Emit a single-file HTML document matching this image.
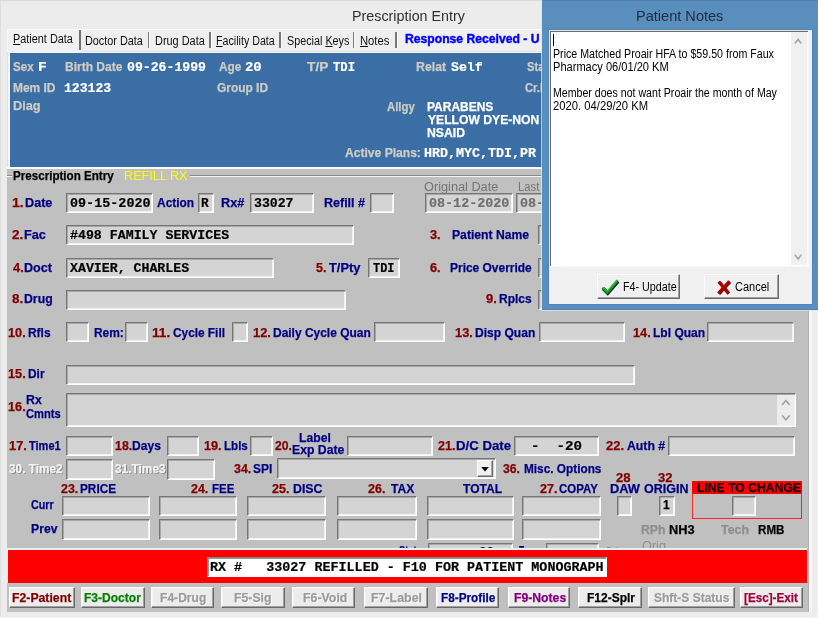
<!DOCTYPE html><html><head><meta charset="utf-8"><title>Prescription Entry</title><style>
*{box-sizing:border-box;margin:0;padding:0}
html,body{width:818px;height:618px;overflow:hidden;background:#f4f4f4}
body{position:relative;will-change:transform;font-family:"Liberation Sans",sans-serif;font-size:13px;color:#000}
.a{position:absolute;white-space:nowrap}
.t{position:absolute;white-space:pre;transform-origin:0 0}
.bd{-webkit-text-stroke:0.25px currentColor}
.bm{-webkit-text-stroke:0.2px currentColor}
.in{position:absolute;background:#d4d4d4;border:1px solid;border-color:#767676 #fff #fff #767676;box-shadow:inset 1px 1px 0 #a8a8a8,inset -1px -1px 0 #f4f4f4}
.dis{text-shadow:1px 1px 0 #808080}
.disb{text-shadow:1px 1px 0 #fff}
.btn{position:absolute;background:#ececec;border:1px solid;border-color:#fff #696969 #696969 #fff;box-shadow:inset -1px -1px 0 #a0a0a0,inset 1px 1px 0 #f4f4f4}
.sep{position:absolute;top:32px;width:1.3px;height:16px;background:#787878;box-shadow:1px 0 0 #fafafa}
</style></head><body>
<div class="a" style="left:0;top:0;width:817px;height:617px;background:#ececec;border-radius:0 0 5px 2px;border-left:1px solid #dedede"></div>
<div class="a" style="left:0;top:0;width:818px;height:1px;background:#dadada"></div>
<div class="a" style="left:6.5px;top:29px;width:805.5px;height:583px;background:#f7f7f7;border-left:1px solid #e2e2e2"></div>
<div class="t" style="left:351.68px;top:6.60px;font-family:'Liberation Sans',sans-serif;font-size:15px;line-height:17px;font-weight:normal;color:#303030;transform:scaleX(0.9539);">Prescription Entry</div>
<div class="a" style="left:7px;top:167px;width:802px;height:445px;background:#c0c0c0;border-top:2px solid #fbfbfb;border-right:1.5px solid #b0b0b0"></div>
<div class="a" style="left:7px;top:29px;width:805px;height:23px;background:#efefef;border-top:1px solid #fbfbfb;border-bottom:1px solid #e4e4e4"></div>
<div class="a" style="left:6.5px;top:29px;width:73.5px;height:23px;border-left:1px solid #f9f9f9;border-top:1px solid #f9f9f9;background:#f1f1f1"></div>
<div class="a" style="left:79.3px;top:30px;width:1.6px;height:19.5px;background:#707070"></div>
<div class="t" style="left:13.35px;top:31.50px;font-family:'Liberation Sans',sans-serif;font-size:12.5px;line-height:14px;font-weight:normal;color:#101010;transform:scaleX(0.8705);"><u>P</u>atient Data</div>
<div class="t" style="left:84.75px;top:33.60px;font-family:'Liberation Sans',sans-serif;font-size:12.5px;line-height:14px;font-weight:normal;color:#101010;transform:scaleX(0.8678);">Doctor Data</div>
<div class="t" style="left:155.05px;top:33.60px;font-family:'Liberation Sans',sans-serif;font-size:12.5px;line-height:14px;font-weight:normal;color:#101010;transform:scaleX(0.8739);">Dru<u>g</u> Data</div>
<div class="t" style="left:215.97px;top:33.60px;font-family:'Liberation Sans',sans-serif;font-size:12.5px;line-height:14px;font-weight:normal;color:#101010;transform:scaleX(0.8546);"><u>F</u>acility Data</div>
<div class="t" style="left:286.76px;top:33.60px;font-family:'Liberation Sans',sans-serif;font-size:12.5px;line-height:14px;font-weight:normal;color:#101010;transform:scaleX(0.8632);">Special <u>K</u>eys</div>
<div class="t" style="left:359.52px;top:33.60px;font-family:'Liberation Sans',sans-serif;font-size:12.5px;line-height:14px;font-weight:normal;color:#101010;transform:scaleX(0.8981);"><u>N</u>otes</div>
<div class="sep" style="left:148px"></div>
<div class="sep" style="left:209.3px"></div>
<div class="sep" style="left:279.4px"></div>
<div class="sep" style="left:353px"></div>
<div class="sep" style="left:395.4px"></div>
<div class="t bd" style="left:405.14px;top:31.60px;font-family:'Liberation Sans',sans-serif;font-size:12.5px;line-height:14px;font-weight:bold;color:#0000ff;transform:scaleX(0.9727);-webkit-text-stroke:0.45px #0000ff;">Response Received - U</div>
<div class="a" style="left:10px;top:52.5px;width:800px;height:114px;background:#3a6ea5"></div>
<div class="t bd" style="left:13.12px;top:59.30px;font-family:'Liberation Sans',sans-serif;font-size:13px;line-height:15px;font-weight:bold;color:#cfccc5;transform:scaleX(0.8909);">Sex</div>
<div class="t bm" style="left:37.67px;top:60.30px;font-family:'Liberation Mono',monospace;font-size:13.5px;line-height:16px;font-weight:bold;color:#ffffff;transform:scaleX(1.0746);">F</div>
<div class="t bd" style="left:64.95px;top:59.30px;font-family:'Liberation Sans',sans-serif;font-size:13px;line-height:15px;font-weight:bold;color:#cfccc5;transform:scaleX(0.9232);">Birth Date</div>
<div class="t bm" style="left:127.18px;top:60.30px;font-family:'Liberation Mono',monospace;font-size:13.5px;line-height:16px;font-weight:bold;color:#ffffff;transform:scaleX(0.9754);">09-26-1999</div>
<div class="t bd" style="left:218.62px;top:59.30px;font-family:'Liberation Sans',sans-serif;font-size:13px;line-height:15px;font-weight:bold;color:#cfccc5;transform:scaleX(0.9071);">Age</div>
<div class="t bm" style="left:244.95px;top:60.30px;font-family:'Liberation Mono',monospace;font-size:13.5px;line-height:16px;font-weight:bold;color:#ffffff;transform:scaleX(1.0302);">20</div>
<div class="t bd" style="left:307.30px;top:59.30px;font-family:'Liberation Sans',sans-serif;font-size:13px;line-height:15px;font-weight:bold;color:#cfccc5;transform:scaleX(1.0563);">T/P</div>
<div class="t bm" style="left:333.41px;top:60.30px;font-family:'Liberation Mono',monospace;font-size:13.5px;line-height:16px;font-weight:bold;color:#ffffff;transform:scaleX(0.9066);">TDI</div>
<div class="t bd" style="left:416.43px;top:59.30px;font-family:'Liberation Sans',sans-serif;font-size:13px;line-height:15px;font-weight:bold;color:#cfccc5;transform:scaleX(0.9478);">Relat</div>
<div class="t bm" style="left:451.29px;top:60.30px;font-family:'Liberation Mono',monospace;font-size:13.5px;line-height:16px;font-weight:bold;color:#ffffff;transform:scaleX(0.9752);">Self</div>
<div class="t bd" style="left:526.53px;top:59.30px;font-family:'Liberation Sans',sans-serif;font-size:13px;line-height:15px;font-weight:bold;color:#cfccc5;transform:scaleX(0.8600);">Status</div>
<div class="t bd" style="left:12.55px;top:80.20px;font-family:'Liberation Sans',sans-serif;font-size:13px;line-height:15px;font-weight:bold;color:#cfccc5;transform:scaleX(0.9185);">Mem ID</div>
<div class="t bm" style="left:63.58px;top:81.20px;font-family:'Liberation Mono',monospace;font-size:13.5px;line-height:16px;font-weight:bold;color:#ffffff;transform:scaleX(0.9713);">123123</div>
<div class="t bd" style="left:216.63px;top:80.20px;font-family:'Liberation Sans',sans-serif;font-size:13px;line-height:15px;font-weight:bold;color:#cfccc5;transform:scaleX(0.9169);">Group ID</div>
<div class="t bd" style="left:525.15px;top:80.20px;font-family:'Liberation Sans',sans-serif;font-size:13px;line-height:15px;font-weight:bold;color:#cfccc5;transform:scaleX(0.8600);">Cr.Lmt</div>
<div class="t bd" style="left:12.50px;top:98.40px;font-family:'Liberation Sans',sans-serif;font-size:13px;line-height:15px;font-weight:bold;color:#cfccc5;transform:scaleX(0.9801);">Diag</div>
<div class="t bd" style="left:386.82px;top:98.90px;font-family:'Liberation Sans',sans-serif;font-size:13px;line-height:15px;font-weight:bold;color:#cfccc5;transform:scaleX(0.8749);">Allgy</div>
<div class="t bd" style="left:426.95px;top:99.90px;font-family:'Liberation Sans',sans-serif;font-size:12.5px;line-height:14px;font-weight:bold;color:#ffffff;transform:scaleX(0.9573);">PARABENS</div>
<div class="t bd" style="left:427.51px;top:113.40px;font-family:'Liberation Sans',sans-serif;font-size:12.5px;line-height:14px;font-weight:bold;color:#ffffff;transform:scaleX(0.9713);">YELLOW DYE-NON</div>
<div class="t bd" style="left:426.93px;top:126.20px;font-family:'Liberation Sans',sans-serif;font-size:12.5px;line-height:14px;font-weight:bold;color:#ffffff;transform:scaleX(0.9794);">NSAID</div>
<div class="t bd" style="left:344.81px;top:145.30px;font-family:'Liberation Sans',sans-serif;font-size:13px;line-height:15px;font-weight:bold;color:#cfccc5;transform:scaleX(0.9296);">Active Plans:</div>
<div class="t bm" style="left:423.87px;top:146.30px;font-family:'Liberation Mono',monospace;font-size:13.5px;line-height:16px;font-weight:bold;color:#ffffff;transform:scaleX(0.9876);">HRD,MYC,TDI,PR</div>
<div class="a" style="left:7px;top:174.6px;width:795px;height:1px;background:#8a8a8a"></div>
<div class="a" style="left:7px;top:175.6px;width:795px;height:1px;background:#f4f4f4"></div>
<div class="a" style="left:12px;top:170px;width:178px;height:12px;background:#c0c0c0"></div>
<div class="t bd" style="left:12.57px;top:168.30px;font-family:'Liberation Sans',sans-serif;font-size:13px;line-height:15px;font-weight:bold;color:#000;transform:scaleX(0.8931);">Prescription Entry</div>
<div class="t" style="left:123.61px;top:168.50px;font-family:'Liberation Sans',sans-serif;font-size:12.5px;line-height:14px;font-weight:normal;color:#ffff00;transform:scaleX(1.0128);">REFILL RX</div>
<div class="t bd" style="left:11.62px;top:195.00px;font-family:'Liberation Sans',sans-serif;font-size:13px;line-height:15px;font-weight:bold;color:#800000;transform:scaleX(1.0798);">1.</div>
<div class="t bd" style="left:24.91px;top:195.00px;font-family:'Liberation Sans',sans-serif;font-size:13px;line-height:15px;font-weight:bold;color:#000080;transform:scaleX(0.9726);">Date</div>
<div class="in" style="left:66px;top:192.5px;width:87.4px;height:20.2px;"></div>
<div class="t bm" style="left:70.07px;top:196.00px;font-family:'Liberation Mono',monospace;font-size:13.5px;line-height:16px;font-weight:bold;color:#000;transform:scaleX(0.9942);">09-15-2020</div>
<div class="t bd" style="left:156.91px;top:195.00px;font-family:'Liberation Sans',sans-serif;font-size:13px;line-height:15px;font-weight:bold;color:#000080;transform:scaleX(0.9190);">Action</div>
<div class="in" style="left:197.5px;top:192.5px;width:16.4px;height:20.2px;"></div>
<div class="t bm" style="left:200.50px;top:196.00px;font-family:'Liberation Mono',monospace;font-size:13.5px;line-height:16px;font-weight:bold;color:#000;transform:scaleX(0.9481);">R</div>
<div class="t bd" style="left:221.21px;top:195.00px;font-family:'Liberation Sans',sans-serif;font-size:13px;line-height:15px;font-weight:bold;color:#000080;transform:scaleX(0.9775);">Rx#</div>
<div class="in" style="left:250px;top:192.5px;width:64.4px;height:20.2px;"></div>
<div class="t bm" style="left:253.99px;top:196.00px;font-family:'Liberation Mono',monospace;font-size:13.5px;line-height:16px;font-weight:bold;color:#000;transform:scaleX(0.9755);">33027</div>
<div class="t bd" style="left:323.82px;top:195.00px;font-family:'Liberation Sans',sans-serif;font-size:13px;line-height:15px;font-weight:bold;color:#000080;transform:scaleX(0.9618);">Refill #</div>
<div class="in" style="left:370px;top:192.5px;width:23.6px;height:20.2px;"></div>
<div class="t" style="left:424.00px;top:180.30px;font-family:'Liberation Sans',sans-serif;font-size:12.5px;line-height:14px;font-weight:normal;color:#757575;transform:scaleX(1.0187);">Original Date</div>
<div class="t" style="left:517.72px;top:180.30px;font-family:'Liberation Sans',sans-serif;font-size:12.5px;line-height:14px;font-weight:normal;color:#757575;transform:scaleX(0.9000);">Last Fill Date</div>
<div class="in" style="left:425px;top:193px;width:87.7px;height:19.7px;"></div>
<div class="t bm" style="left:429.37px;top:196.00px;font-family:'Liberation Mono',monospace;font-size:13.5px;line-height:16px;font-weight:bold;color:#707070;transform:scaleX(0.9917);">08-12-2020</div>
<div class="in" style="left:515.8px;top:193px;width:87.6px;height:19.7px;"></div>
<div class="t bm" style="left:519.67px;top:196.00px;font-family:'Liberation Mono',monospace;font-size:13.5px;line-height:16px;font-weight:bold;color:#707070;transform:scaleX(0.9917);">08-12-2020</div>
<div class="t bd" style="left:12.08px;top:226.80px;font-family:'Liberation Sans',sans-serif;font-size:13px;line-height:15px;font-weight:bold;color:#800000;transform:scaleX(1.0344);">2.</div>
<div class="t bd" style="left:23.51px;top:226.80px;font-family:'Liberation Sans',sans-serif;font-size:13px;line-height:15px;font-weight:bold;color:#000080;transform:scaleX(0.9781);">Fac</div>
<div class="in" style="left:66px;top:225px;width:288.4px;height:20.4px;"></div>
<div class="t bm" style="left:69.99px;top:227.80px;font-family:'Liberation Mono',monospace;font-size:13.5px;line-height:16px;font-weight:bold;color:#000;transform:scaleX(0.9819);">#498 FAMILY SERVICES</div>
<div class="t bd" style="left:429.80px;top:226.80px;font-family:'Liberation Sans',sans-serif;font-size:13px;line-height:15px;font-weight:bold;color:#800000;transform:scaleX(0.9827);">3.</div>
<div class="t bd" style="left:452.24px;top:226.80px;font-family:'Liberation Sans',sans-serif;font-size:13px;line-height:15px;font-weight:bold;color:#000080;transform:scaleX(0.9357);">Patient Name</div>
<div class="in" style="left:538px;top:225px;width:162.4px;height:20.4px;"></div>
<div class="t bd" style="left:12.50px;top:260.00px;font-family:'Liberation Sans',sans-serif;font-size:13px;line-height:15px;font-weight:bold;color:#800000;transform:scaleX(0.9927);">4.</div>
<div class="t bd" style="left:23.51px;top:260.00px;font-family:'Liberation Sans',sans-serif;font-size:13px;line-height:15px;font-weight:bold;color:#000080;transform:scaleX(0.9674);">Doct</div>
<div class="in" style="left:66px;top:258px;width:207.8px;height:20.0px;"></div>
<div class="t bm" style="left:69.70px;top:261.00px;font-family:'Liberation Mono',monospace;font-size:13.5px;line-height:16px;font-weight:bold;color:#000;transform:scaleX(0.9800);">XAVIER, CHARLES</div>
<div class="t bd" style="left:316.30px;top:260.00px;font-family:'Liberation Sans',sans-serif;font-size:13px;line-height:15px;font-weight:bold;color:#800000;transform:scaleX(0.9625);">5.</div>
<div class="t bd" style="left:329.00px;top:260.00px;font-family:'Liberation Sans',sans-serif;font-size:13px;line-height:15px;font-weight:bold;color:#000080;transform:scaleX(0.9885);">T/Pty</div>
<div class="in" style="left:368px;top:258px;width:31.8px;height:20.0px;"></div>
<div class="t bm" style="left:372.81px;top:261.00px;font-family:'Liberation Mono',monospace;font-size:13.5px;line-height:16px;font-weight:bold;color:#000;transform:scaleX(0.8807);">TDI</div>
<div class="t bd" style="left:429.80px;top:260.00px;font-family:'Liberation Sans',sans-serif;font-size:13px;line-height:15px;font-weight:bold;color:#800000;transform:scaleX(0.9827);">6.</div>
<div class="t bd" style="left:449.55px;top:260.00px;font-family:'Liberation Sans',sans-serif;font-size:13px;line-height:15px;font-weight:bold;color:#000080;transform:scaleX(0.9197);">Price Override</div>
<div class="in" style="left:538px;top:258px;width:162.4px;height:20.0px;"></div>
<div class="t bd" style="left:12.08px;top:291.00px;font-family:'Liberation Sans',sans-serif;font-size:13px;line-height:15px;font-weight:bold;color:#800000;transform:scaleX(1.0344);">8.</div>
<div class="t bd" style="left:23.53px;top:291.00px;font-family:'Liberation Sans',sans-serif;font-size:13px;line-height:15px;font-weight:bold;color:#000080;transform:scaleX(0.9447);">Drug</div>
<div class="in" style="left:66px;top:290.3px;width:280.4px;height:20.1px;"></div>
<div class="t bd" style="left:486.20px;top:291.00px;font-family:'Liberation Sans',sans-serif;font-size:13px;line-height:15px;font-weight:bold;color:#800000;transform:scaleX(0.9930);">9.</div>
<div class="t bd" style="left:498.85px;top:291.00px;font-family:'Liberation Sans',sans-serif;font-size:13px;line-height:15px;font-weight:bold;color:#000080;transform:scaleX(0.9219);">Rplcs</div>
<div class="in" style="left:538px;top:290.3px;width:162.4px;height:20.1px;"></div>
<div class="t bd" style="left:8.00px;top:325.20px;font-family:'Liberation Sans',sans-serif;font-size:13px;line-height:15px;font-weight:bold;color:#800000;transform:scaleX(0.9823);">10.</div>
<div class="t bd" style="left:27.55px;top:325.20px;font-family:'Liberation Sans',sans-serif;font-size:13px;line-height:15px;font-weight:bold;color:#000080;transform:scaleX(0.9173);">Rfls</div>
<div class="in" style="left:66px;top:322.2px;width:23.4px;height:20.1px;"></div>
<div class="t bd" style="left:93.95px;top:325.20px;font-family:'Liberation Sans',sans-serif;font-size:13px;line-height:15px;font-weight:bold;color:#000080;transform:scaleX(0.9179);">Rem:</div>
<div class="in" style="left:125.3px;top:322.2px;width:23.1px;height:20.1px;"></div>
<div class="t bd" style="left:152.14px;top:325.20px;font-family:'Liberation Sans',sans-serif;font-size:13px;line-height:15px;font-weight:bold;color:#800000;transform:scaleX(1.0524);">11.</div>
<div class="t bd" style="left:172.73px;top:325.20px;font-family:'Liberation Sans',sans-serif;font-size:13px;line-height:15px;font-weight:bold;color:#000080;transform:scaleX(0.9105);">Cycle Fill</div>
<div class="in" style="left:232.2px;top:322.2px;width:16.0px;height:20.1px;"></div>
<div class="t bd" style="left:252.70px;top:325.20px;font-family:'Liberation Sans',sans-serif;font-size:13px;line-height:15px;font-weight:bold;color:#800000;transform:scaleX(0.9884);">12.</div>
<div class="t bd" style="left:272.85px;top:325.20px;font-family:'Liberation Sans',sans-serif;font-size:13px;line-height:15px;font-weight:bold;color:#000080;transform:scaleX(0.9201);">Daily Cycle Quan</div>
<div class="in" style="left:373.8px;top:322.2px;width:71.4px;height:20.1px;"></div>
<div class="t bd" style="left:454.50px;top:325.20px;font-family:'Liberation Sans',sans-serif;font-size:13px;line-height:15px;font-weight:bold;color:#800000;transform:scaleX(0.9884);">13.</div>
<div class="t bd" style="left:474.55px;top:325.20px;font-family:'Liberation Sans',sans-serif;font-size:13px;line-height:15px;font-weight:bold;color:#000080;transform:scaleX(0.9266);">Disp Quan</div>
<div class="in" style="left:538.7px;top:322.2px;width:86.2px;height:20.1px;"></div>
<div class="t bd" style="left:633.00px;top:325.20px;font-family:'Liberation Sans',sans-serif;font-size:13px;line-height:15px;font-weight:bold;color:#800000;transform:scaleX(0.9823);">14.</div>
<div class="t bd" style="left:653.15px;top:325.20px;font-family:'Liberation Sans',sans-serif;font-size:13px;line-height:15px;font-weight:bold;color:#000080;transform:scaleX(0.9255);">Lbl Quan</div>
<div class="in" style="left:707px;top:322.2px;width:87.1px;height:20.1px;"></div>
<div class="t bd" style="left:8.00px;top:365.60px;font-family:'Liberation Sans',sans-serif;font-size:13px;line-height:15px;font-weight:bold;color:#800000;transform:scaleX(0.9823);">15.</div>
<div class="t bd" style="left:27.56px;top:365.60px;font-family:'Liberation Sans',sans-serif;font-size:13px;line-height:15px;font-weight:bold;color:#000080;transform:scaleX(0.9143);">Dir</div>
<div class="in" style="left:66px;top:365px;width:569.0px;height:20.0px;"></div>
<div class="t bd" style="left:8.00px;top:399.40px;font-family:'Liberation Sans',sans-serif;font-size:13px;line-height:15px;font-weight:bold;color:#800000;transform:scaleX(0.9823);">16.</div>
<div class="t bd" style="left:26.23px;top:392.40px;font-family:'Liberation Sans',sans-serif;font-size:13px;line-height:15px;font-weight:bold;color:#000080;transform:scaleX(0.9504);">Rx</div>
<div class="t bd" style="left:25.95px;top:405.70px;font-family:'Liberation Sans',sans-serif;font-size:13px;line-height:15px;font-weight:bold;color:#000080;transform:scaleX(0.8579);">Cmnts</div>
<div class="in" style="left:66px;top:393px;width:729.9px;height:34.1px;"></div>
<svg class="a" style="left:776.6px;top:395px" width="17.4" height="30" viewBox="0 0 17.4 30"><rect width="17.4" height="30" fill="#ececec"/><path d="M5 10 L8.9 5.6 L12.8 10 M5 20.4 L8.9 24.8 L12.8 20.4" stroke="#a6a6a6" stroke-width="1.7" fill="none"/></svg>
<div class="t bd" style="left:8.70px;top:437.60px;font-family:'Liberation Sans',sans-serif;font-size:13px;line-height:15px;font-weight:bold;color:#800000;transform:scaleX(0.9884);">17.</div>
<div class="t bd" style="left:29.30px;top:437.60px;font-family:'Liberation Sans',sans-serif;font-size:13px;line-height:15px;font-weight:bold;color:#000080;transform:scaleX(0.8483);">Time1</div>
<div class="in" style="left:66.4px;top:436px;width:46.3px;height:20.1px;"></div>
<div class="t bd" style="left:114.53px;top:437.60px;font-family:'Liberation Sans',sans-serif;font-size:13px;line-height:15px;font-weight:bold;color:#800000;transform:scaleX(0.9520);">18.</div>
<div class="t bd" style="left:132.05px;top:437.60px;font-family:'Liberation Sans',sans-serif;font-size:13px;line-height:15px;font-weight:bold;color:#000080;transform:scaleX(0.9281);">Days</div>
<div class="in" style="left:167.4px;top:436px;width:32.0px;height:20.1px;"></div>
<div class="t bd" style="left:203.71px;top:437.60px;font-family:'Liberation Sans',sans-serif;font-size:13px;line-height:15px;font-weight:bold;color:#800000;transform:scaleX(0.9763);">19.</div>
<div class="t bd" style="left:223.58px;top:437.60px;font-family:'Liberation Sans',sans-serif;font-size:13px;line-height:15px;font-weight:bold;color:#000080;transform:scaleX(0.8903);">Lbls</div>
<div class="in" style="left:250.2px;top:436px;width:22.9px;height:20.1px;"></div>
<div class="t bd" style="left:275.32px;top:437.60px;font-family:'Liberation Sans',sans-serif;font-size:13px;line-height:15px;font-weight:bold;color:#800000;transform:scaleX(0.9351);">20.</div>
<div class="t bd" style="left:298.74px;top:429.80px;font-family:'Liberation Sans',sans-serif;font-size:13px;line-height:15px;font-weight:bold;color:#000080;transform:scaleX(0.9360);">Label</div>
<div class="t bd" style="left:291.54px;top:441.80px;font-family:'Liberation Sans',sans-serif;font-size:13px;line-height:15px;font-weight:bold;color:#000080;transform:scaleX(0.9414);">Exp Date</div>
<div class="in" style="left:346.6px;top:436px;width:86.4px;height:20.1px;"></div>
<div class="t bd" style="left:437.71px;top:437.60px;font-family:'Liberation Sans',sans-serif;font-size:13px;line-height:15px;font-weight:bold;color:#800000;transform:scaleX(0.9646);">21.</div>
<div class="t bd" style="left:456.07px;top:437.60px;font-family:'Liberation Sans',sans-serif;font-size:13px;line-height:15px;font-weight:bold;color:#000080;transform:scaleX(1.0162);">D/C Date</div>
<div class="in" style="left:514px;top:436px;width:85.4px;height:20.1px;"></div>
<div class="t bm" style="left:531.38px;top:438.60px;font-family:'Liberation Mono',monospace;font-size:13.5px;line-height:16px;font-weight:bold;color:#000;transform:scaleX(1.0507);">-  -20</div>
<div class="t bd" style="left:606.30px;top:437.60px;font-family:'Liberation Sans',sans-serif;font-size:13px;line-height:15px;font-weight:bold;color:#800000;transform:scaleX(0.9942);">22.</div>
<div class="t bd" style="left:627.31px;top:437.60px;font-family:'Liberation Sans',sans-serif;font-size:13px;line-height:15px;font-weight:bold;color:#000080;transform:scaleX(0.9422);">Auth #</div>
<div class="in" style="left:668px;top:436px;width:127.0px;height:20.1px;"></div>
<div class="t bd dis" style="left:9.32px;top:461.20px;font-family:'Liberation Sans',sans-serif;font-size:13px;line-height:15px;font-weight:bold;color:#f4f4f4;transform:scaleX(0.9095);">30. Time2</div>
<div class="in" style="left:66.4px;top:459px;width:46.3px;height:20.7px;"></div>
<div class="t bd dis" style="left:115.11px;top:461.20px;font-family:'Liberation Sans',sans-serif;font-size:13px;line-height:15px;font-weight:bold;color:#f4f4f4;transform:scaleX(0.9129);">31.Time3</div>
<div class="in" style="left:167.4px;top:459px;width:47.6px;height:20.7px;"></div>
<div class="t bd" style="left:234.41px;top:461.20px;font-family:'Liberation Sans',sans-serif;font-size:13px;line-height:15px;font-weight:bold;color:#800000;transform:scaleX(0.9590);">34.</div>
<div class="t bd" style="left:252.51px;top:461.20px;font-family:'Liberation Sans',sans-serif;font-size:13px;line-height:15px;font-weight:bold;color:#000080;transform:scaleX(0.9158);">SPI</div>
<div class="in" style="left:277px;top:458.2px;width:218.7px;height:20.8px;"></div>
<div class="a" style="left:476.6px;top:460px;width:16.8px;height:17px;background:#f0f0f0;border:1px solid;border-color:#fff #6d6d6d #6d6d6d #fff;box-shadow:inset -1px -1px 0 #a8a8a8"></div>
<svg class="a" style="left:481px;top:467px" width="8" height="4.5" viewBox="0 0 8 4.5"><path d="M0.2 0 L7.8 0 L4 4.4 Z" fill="#000"/></svg>
<div class="t bd" style="left:503.31px;top:461.20px;font-family:'Liberation Sans',sans-serif;font-size:13px;line-height:15px;font-weight:bold;color:#800000;transform:scaleX(0.9415);">36.</div>
<div class="t bd" style="left:523.86px;top:461.20px;font-family:'Liberation Sans',sans-serif;font-size:13px;line-height:15px;font-weight:bold;color:#000080;transform:scaleX(0.9083);">Misc. Options</div>
<div class="t bd" style="left:60.51px;top:481.20px;font-family:'Liberation Sans',sans-serif;font-size:13px;line-height:15px;font-weight:bold;color:#800000;transform:scaleX(0.9528);">23.</div>
<div class="t bd" style="left:80.26px;top:481.20px;font-family:'Liberation Sans',sans-serif;font-size:13px;line-height:15px;font-weight:bold;color:#000080;transform:scaleX(0.9073);">PRICE</div>
<div class="t bd" style="left:190.91px;top:481.20px;font-family:'Liberation Sans',sans-serif;font-size:13px;line-height:15px;font-weight:bold;color:#800000;transform:scaleX(0.9587);">24.</div>
<div class="t bd" style="left:211.88px;top:481.20px;font-family:'Liberation Sans',sans-serif;font-size:13px;line-height:15px;font-weight:bold;color:#000080;transform:scaleX(0.8828);">FEE</div>
<div class="t bd" style="left:272.31px;top:481.20px;font-family:'Liberation Sans',sans-serif;font-size:13px;line-height:15px;font-weight:bold;color:#800000;transform:scaleX(0.9646);">25.</div>
<div class="t bd" style="left:292.73px;top:481.20px;font-family:'Liberation Sans',sans-serif;font-size:13px;line-height:15px;font-weight:bold;color:#000080;transform:scaleX(0.9500);">DISC</div>
<div class="t bd" style="left:368.31px;top:481.20px;font-family:'Liberation Sans',sans-serif;font-size:13px;line-height:15px;font-weight:bold;color:#800000;transform:scaleX(0.9646);">26.</div>
<div class="t bd" style="left:390.50px;top:481.20px;font-family:'Liberation Sans',sans-serif;font-size:13px;line-height:15px;font-weight:bold;color:#000080;transform:scaleX(0.9283);">TAX</div>
<div class="t bd" style="left:462.70px;top:481.20px;font-family:'Liberation Sans',sans-serif;font-size:13px;line-height:15px;font-weight:bold;color:#000080;transform:scaleX(0.9260);">TOTAL</div>
<div class="t bd" style="left:540.01px;top:481.20px;font-family:'Liberation Sans',sans-serif;font-size:13px;line-height:15px;font-weight:bold;color:#800000;transform:scaleX(0.9646);">27.</div>
<div class="t bd" style="left:558.84px;top:481.20px;font-family:'Liberation Sans',sans-serif;font-size:13px;line-height:15px;font-weight:bold;color:#000080;transform:scaleX(0.8799);">COPAY</div>
<div class="t bd" style="left:615.59px;top:469.50px;font-family:'Liberation Sans',sans-serif;font-size:13px;line-height:15px;font-weight:bold;color:#800000;transform:scaleX(1.0124);">28</div>
<div class="t bd" style="left:657.90px;top:469.50px;font-family:'Liberation Sans',sans-serif;font-size:13px;line-height:15px;font-weight:bold;color:#800000;transform:scaleX(0.9976);">32</div>
<div class="t bd" style="left:610.40px;top:481.00px;font-family:'Liberation Sans',sans-serif;font-size:13px;line-height:15px;font-weight:bold;color:#000080;transform:scaleX(0.9886);">DAW</div>
<div class="t bd" style="left:644.41px;top:481.00px;font-family:'Liberation Sans',sans-serif;font-size:13px;line-height:15px;font-weight:bold;color:#000080;transform:scaleX(0.9608);">ORIGIN</div>
<div class="a" style="left:692.4px;top:481.2px;width:109.4px;height:12.7px;background:#ff0000"></div>
<div class="a" style="left:692.4px;top:493px;width:109.4px;height:26.3px;border:1.2px solid #f02828;border-top:none"></div>
<div class="t bd" style="left:697.24px;top:480.00px;font-family:'Liberation Sans',sans-serif;font-size:13px;line-height:15px;font-weight:bold;color:#100000;transform:scaleX(0.9369);">LINE TO CHANGE</div>
<div class="in" style="left:617.2px;top:495.6px;width:15.3px;height:20.5px;"></div>
<div class="in" style="left:659.2px;top:495.6px;width:15.8px;height:20.5px;"></div>
<div class="t bd" style="left:662.85px;top:497.20px;font-family:'Liberation Sans',sans-serif;font-size:13px;line-height:15px;font-weight:bold;color:#000;transform:scaleX(0.9190);">1</div>
<div class="in" style="left:732px;top:495.5px;width:23.6px;height:20.6px;"></div>
<div class="t bd" style="left:30.97px;top:497.40px;font-family:'Liberation Sans',sans-serif;font-size:13px;line-height:15px;font-weight:bold;color:#000080;transform:scaleX(0.8229);">Curr</div>
<div class="t bd" style="left:30.54px;top:520.70px;font-family:'Liberation Sans',sans-serif;font-size:13px;line-height:15px;font-weight:bold;color:#000080;transform:scaleX(0.9395);">Prev</div>
<div class="in" style="left:62.2px;top:495.9px;width:87.8px;height:20.0px;"></div>
<div class="in" style="left:158.6px;top:495.9px;width:78.9px;height:20.0px;"></div>
<div class="in" style="left:247.1px;top:495.9px;width:79.4px;height:20.0px;"></div>
<div class="in" style="left:337.4px;top:495.9px;width:79.3px;height:20.0px;"></div>
<div class="in" style="left:426.8px;top:495.9px;width:87.1px;height:20.0px;"></div>
<div class="in" style="left:522.3px;top:495.9px;width:79.1px;height:20.0px;"></div>
<div class="in" style="left:62.2px;top:519.4px;width:87.8px;height:20.8px;"></div>
<div class="in" style="left:158.6px;top:519.4px;width:78.9px;height:20.8px;"></div>
<div class="in" style="left:247.1px;top:519.4px;width:79.4px;height:20.8px;"></div>
<div class="in" style="left:337.4px;top:519.4px;width:79.3px;height:20.8px;"></div>
<div class="in" style="left:426.8px;top:519.4px;width:87.1px;height:20.8px;"></div>
<div class="in" style="left:522.3px;top:519.4px;width:79.1px;height:20.8px;"></div>
<div class="t bd" style="left:641.33px;top:521.50px;font-family:'Liberation Sans',sans-serif;font-size:13px;line-height:15px;font-weight:bold;color:#8e8e8e;transform:scaleX(0.9447);">RPh</div>
<div class="t bd" style="left:669.30px;top:521.50px;font-family:'Liberation Sans',sans-serif;font-size:13px;line-height:15px;font-weight:bold;color:#000;transform:scaleX(0.9851);">NH3</div>
<div class="t bd" style="left:721.30px;top:521.50px;font-family:'Liberation Sans',sans-serif;font-size:13px;line-height:15px;font-weight:bold;color:#8e8e8e;transform:scaleX(0.9531);">Tech</div>
<div class="t bd" style="left:757.87px;top:521.50px;font-family:'Liberation Sans',sans-serif;font-size:13px;line-height:15px;font-weight:bold;color:#000;transform:scaleX(0.8927);">RMB</div>
<div class="t" style="left:642.00px;top:538.20px;font-family:'Liberation Sans',sans-serif;font-size:13px;line-height:15px;font-weight:normal;color:#8e8e8e;transform:scaleX(0.9776);">Orig</div>
<div class="t bd" style="left:399.45px;top:543.00px;font-family:'Liberation Sans',sans-serif;font-size:13px;line-height:15px;font-weight:bold;color:#000080;transform:scaleX(0.7163);">Stat</div>
<div class="in" style="left:427.7px;top:542.5px;width:85.7px;height:20.2px;"></div>
<div class="t bm" style="left:479.22px;top:544.60px;font-family:'Liberation Mono',monospace;font-size:13.5px;line-height:16px;font-weight:bold;color:#000;transform:scaleX(0.9225);">00</div>
<div class="t bd" style="left:518.90px;top:543.00px;font-family:'Liberation Sans',sans-serif;font-size:13px;line-height:15px;font-weight:bold;color:#000080;transform:scaleX(0.6425);">Tx</div>
<div class="in" style="left:546.3px;top:542.5px;width:53.1px;height:20.2px;"></div>
<div class="t bd" style="left:607.00px;top:544.30px;font-family:'Liberation Sans',sans-serif;font-size:13px;line-height:15px;font-weight:bold;color:#8e8e8e;transform:scaleX(0.4522);">Tech</div>
<div class="a" style="left:7px;top:548px;width:800px;height:1.6px;background:#e6f2f2"></div>
<div class="a" style="left:6.9px;top:548px;width:1px;height:34.6px;background:#e6f2f2"></div>
<div class="a" style="left:7.8px;top:549.6px;width:799px;height:33px;background:#ff0000"></div>
<div class="a" style="left:207px;top:557px;width:400.4px;height:19.7px;background:#fff;border:1px solid;border-color:#7a8888 #f4ffff #f4ffff #7a8888;box-shadow:inset 1px 1px 0 #8c9a9a"></div>
<div class="t bm" style="left:209.66px;top:559.80px;font-family:'Liberation Mono',monospace;font-size:13.5px;line-height:16px;font-weight:bold;color:#000;transform:scaleX(0.9916);">RX #   33027 REFILLED - F10 FOR PATIENT MONOGRAPH</div>
<div class="btn" style="left:9.3px;top:586.7px;width:65.4px;height:21.3px"></div>
<div class="t bd" style="left:12.23px;top:590.00px;font-family:'Liberation Sans',sans-serif;font-size:13px;line-height:15px;font-weight:bold;color:#800000;transform:scaleX(0.9425);">F2-Patient</div>
<div class="btn" style="left:80.7px;top:586.7px;width:63.9px;height:21.3px"></div>
<div class="t bd" style="left:83.75px;top:590.00px;font-family:'Liberation Sans',sans-serif;font-size:13px;line-height:15px;font-weight:bold;color:#008000;transform:scaleX(0.9256);">F3-Doctor</div>
<div class="btn" style="left:150.9px;top:586.7px;width:62.9px;height:21.3px"></div>
<div class="t bd disb" style="left:160.44px;top:590.00px;font-family:'Liberation Sans',sans-serif;font-size:13px;line-height:15px;font-weight:bold;color:#9c9c9c;transform:scaleX(0.9297);">F4-Drug</div>
<div class="btn" style="left:221.3px;top:586.7px;width:63.4px;height:21.3px"></div>
<div class="t bd disb" style="left:234.33px;top:590.00px;font-family:'Liberation Sans',sans-serif;font-size:13px;line-height:15px;font-weight:bold;color:#9c9c9c;transform:scaleX(0.9428);">F5-Sig</div>
<div class="btn" style="left:292.2px;top:586.7px;width:63.2px;height:21.3px"></div>
<div class="t bd disb" style="left:302.53px;top:590.00px;font-family:'Liberation Sans',sans-serif;font-size:13px;line-height:15px;font-weight:bold;color:#9c9c9c;transform:scaleX(0.9499);">F6-Void</div>
<div class="btn" style="left:364px;top:586.7px;width:64.2px;height:21.3px"></div>
<div class="t bd disb" style="left:371.32px;top:590.00px;font-family:'Liberation Sans',sans-serif;font-size:13px;line-height:15px;font-weight:bold;color:#9c9c9c;transform:scaleX(0.9543);">F7-Label</div>
<div class="btn" style="left:435.9px;top:586.7px;width:63.1px;height:21.3px"></div>
<div class="t bd" style="left:440.66px;top:590.00px;font-family:'Liberation Sans',sans-serif;font-size:13px;line-height:15px;font-weight:bold;color:#000080;transform:scaleX(0.9062);">F8-Profile</div>
<div class="btn" style="left:507.8px;top:586.7px;width:62.6px;height:21.3px"></div>
<div class="t bd" style="left:513.74px;top:590.00px;font-family:'Liberation Sans',sans-serif;font-size:13px;line-height:15px;font-weight:bold;color:#800080;transform:scaleX(0.9378);">F9-Notes</div>
<div class="btn" style="left:578.3px;top:586.7px;width:63.9px;height:21.3px"></div>
<div class="t bd" style="left:586.85px;top:590.00px;font-family:'Liberation Sans',sans-serif;font-size:13px;line-height:15px;font-weight:bold;color:#000;transform:scaleX(0.9232);">F12-Splr</div>
<div class="btn" style="left:648px;top:586.7px;width:86.5px;height:21.3px"></div>
<div class="t bd disb" style="left:653.91px;top:590.00px;font-family:'Liberation Sans',sans-serif;font-size:13px;line-height:15px;font-weight:bold;color:#9c9c9c;transform:scaleX(0.9236);">Shft-S Status</div>
<div class="btn" style="left:739.5px;top:586.7px;width:63.2px;height:21.3px"></div>
<div class="t bd" style="left:743.85px;top:590.00px;font-family:'Liberation Sans',sans-serif;font-size:13px;line-height:15px;font-weight:bold;color:#a0003c;transform:scaleX(0.8990);">[Esc]-Exit</div>
<div class="a" style="left:542px;top:-1px;width:280px;height:311px;background:#5a8ebd;box-shadow:0 0 0 1px rgba(236,228,224,.75),inset 0 -1px 0 #4f84b6;border-top:2px solid #4c7eae"></div>
<div class="a" style="left:549px;top:29.7px;width:263px;height:274px;background:#f0f0f0;box-shadow:0 0 0 1px #4f86ba"></div>
<div class="t" style="left:635.66px;top:6.70px;font-family:'Liberation Sans',sans-serif;font-size:15px;line-height:17px;font-weight:normal;color:#1c2c40;transform:scaleX(0.9705);">Patient Notes</div>
<div class="a" style="left:549px;top:30px;width:260px;height:237px;background:#fff;border:1px solid;border-color:#e8e4e0 #f8f8f8 #f8f8f8 #e8e4e0;box-shadow:inset 1px 1px 0 #6e6e6e"></div>
<div class="a" style="left:791.4px;top:32px;width:16px;height:233.2px;background:#f0f0f0"></div>
<svg class="a" style="left:791.4px;top:32px" width="16" height="233.2" viewBox="0 0 16 233.2"><path d="M3.9 11.6 L7.1 7.4 L10.3 11.6 M3.9 222.8 L7.1 227 L10.3 222.8" stroke="#a9a9a9" stroke-width="1.7" fill="none"/></svg>
<div class="a" style="left:553px;top:34.4px;width:1px;height:12px;background:#000"></div>
<div class="t" style="left:553.07px;top:46.50px;font-family:'Liberation Sans',sans-serif;font-size:12px;line-height:14px;font-weight:normal;color:#000;transform:scaleX(0.8881);">Price Matched Proair HFA to $59.50 from Faux</div>
<div class="t" style="left:553.03px;top:59.50px;font-family:'Liberation Sans',sans-serif;font-size:12px;line-height:14px;font-weight:normal;color:#000;transform:scaleX(0.9228);">Pharmacy 06/01/20 KM</div>
<div class="t" style="left:553.07px;top:85.80px;font-family:'Liberation Sans',sans-serif;font-size:12px;line-height:14px;font-weight:normal;color:#000;transform:scaleX(0.8835);">Member does not want Proair the month of May</div>
<div class="t" style="left:553.37px;top:98.80px;font-family:'Liberation Sans',sans-serif;font-size:12px;line-height:14px;font-weight:normal;color:#000;transform:scaleX(0.9377);">2020. 04/29/20 KM</div>
<div class="a" style="left:597px;top:274.2px;width:82.7px;height:24.6px;background:#f0f0f0;border:1px solid;border-color:#fff #696969 #696969 #fff;box-shadow:inset -1px -1px 0 #a0a0a0"></div>
<svg class="a" style="left:600px;top:277px" width="20" height="19" viewBox="0 0 20 19"><path d="M2.6 10.6 L7.2 15.4 L17.6 3.4" stroke="#000070" stroke-width="3.4" fill="none" transform="translate(0.5,0.9)"/><path d="M2.6 10.6 L7.2 15.4 L17.6 3.4" stroke="#00a400" stroke-width="2.7" fill="none"/><path d="M2.9 10.1 L7.2 14.5 L17.2 3.1" stroke="#38e038" stroke-width="0.9" fill="none"/></svg>
<div class="t" style="left:622.66px;top:280.00px;font-family:'Liberation Sans',sans-serif;font-size:12px;line-height:14px;font-weight:normal;color:#000;transform:scaleX(0.8958);">F4- Update</div>
<div class="a" style="left:703.6px;top:274.2px;width:75.1px;height:24.6px;background:#f0f0f0;border:1px solid;border-color:#fff #696969 #696969 #fff;box-shadow:inset -1px -1px 0 #a0a0a0"></div>
<svg class="a" style="left:715.5px;top:279px" width="16" height="17" viewBox="0 0 16 17"><path d="M2.6 2.6 L12.2 14 M13.2 2.2 L2.2 14.2" stroke="#600000" stroke-width="3.4" fill="none" transform="translate(0.7,0.6)"/><path d="M2.6 2.6 L12.2 14 M13.2 2.2 L2.2 14.2" stroke="#b40000" stroke-width="2.7" fill="none"/></svg>
<div class="t" style="left:735.48px;top:280.00px;font-family:'Liberation Sans',sans-serif;font-size:12px;line-height:14px;font-weight:normal;color:#000;transform:scaleX(0.9167);">Cancel</div>
</body></html>
